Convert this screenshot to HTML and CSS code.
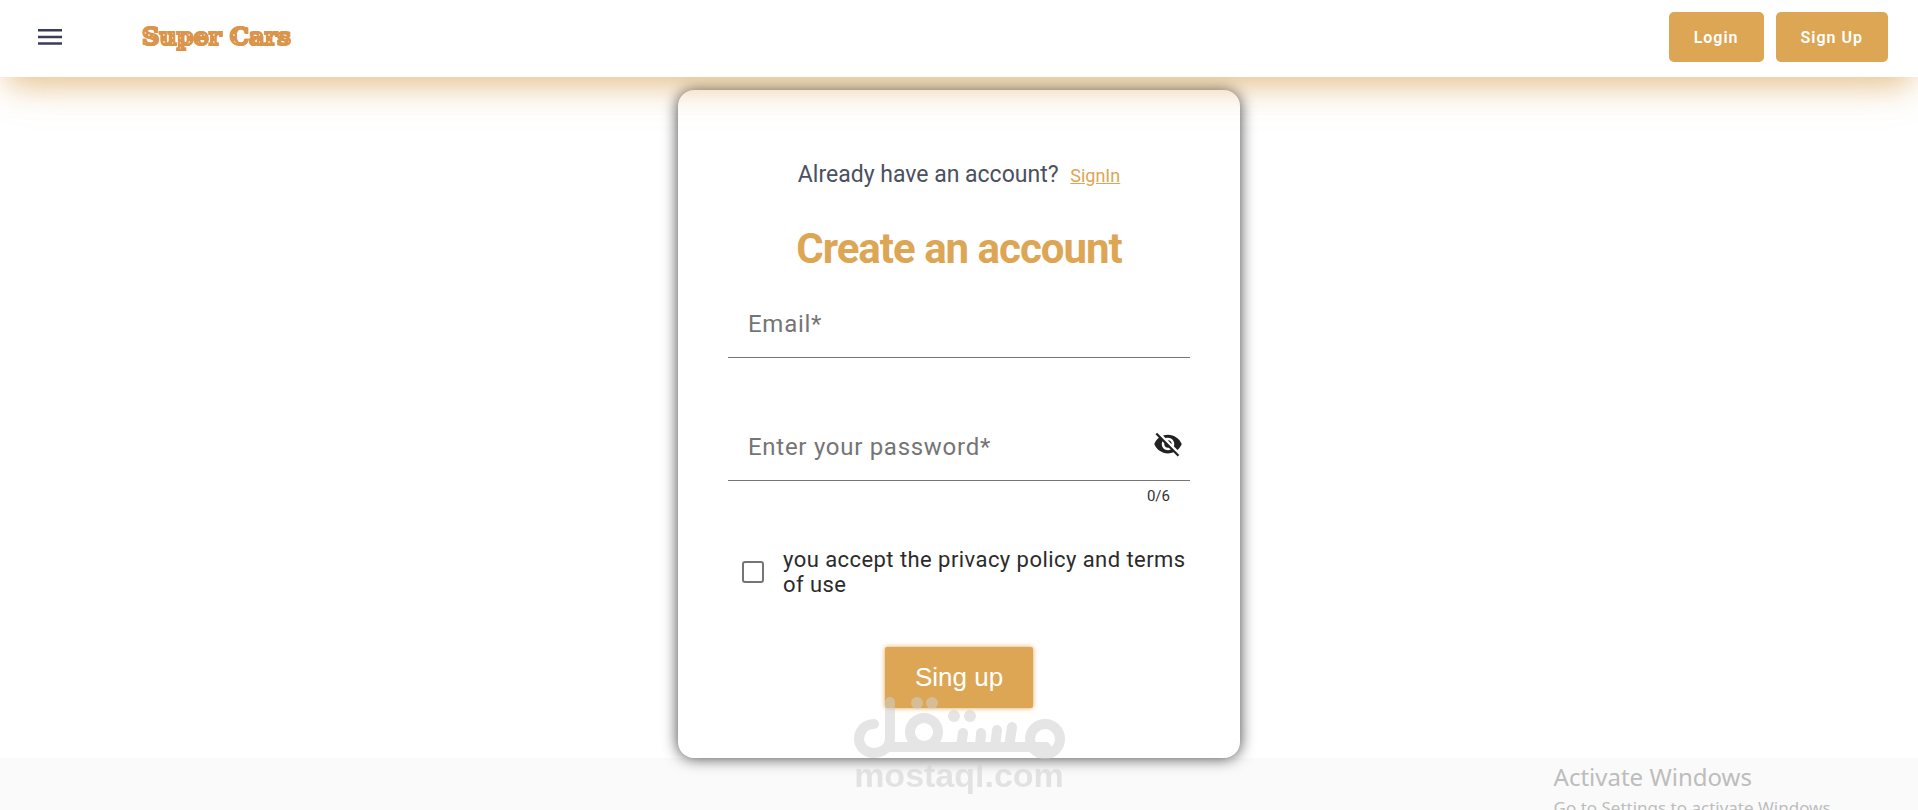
FILE: index.html
```html
<!DOCTYPE html>
<html lang="en">
<head>
<meta charset="utf-8">
<title>Super Cars</title>
<meta name="viewport" content="width=device-width, initial-scale=1">
<link rel="stylesheet" href="styles.css">
</head>
<body>
<header class="topbar">
  <button class="menu-button" type="button" aria-label="Open menu">
    <svg class="menu-icon" viewBox="0 0 24 16" aria-hidden="true"><path d="M0 0h24v2.500H0zM0 6.700h24v2.500H0zM0 13.200h24v2.500H0z"/></svg>
  </button>
  <a class="brand" href="#">Super Cars</a>
  <nav class="topbar-actions">
    <button class="nav-button" type="button">Login</button>
    <button class="nav-button" type="button">Sign Up</button>
  </nav>
</header>
<main class="page">
  <form class="card">
    <p class="signin-line">Already have an account? <a class="signin-link" href="#">SignIn</a></p>
    <h1 class="title">Create an account</h1>
    <div class="field">
      <input class="field-input" id="email" type="email" placeholder="Email*" aria-label="Email">
    </div>
    <div class="field field-password">
      <input class="field-input" id="password" type="password" maxlength="6" placeholder="Enter your password*" aria-label="Enter your password">
      <button class="eye-button" type="button" aria-label="Show password">
        <svg class="eye-icon" viewBox="0 0 24 24" aria-hidden="true"><path d="M12 7c2.760 0 5 2.240 5 5 0 .65-.13 1.260-.36 1.830l2.920 2.920c1.510-1.260 2.700-2.890 3.430-4.750-1.730-4.390-6-7.500-11-7.500-1.400 0-2.740.25-3.980.7l2.160 2.160C10.740 7.130 11.350 7 12 7zM2 4.270l2.280 2.280.46.46C3.080 8.300 1.780 10.020 1 12c1.730 4.390 6 7.500 11 7.500 1.550 0 3.030-.3 4.380-.84l.42.42L19.730 22 21 20.730 3.270 3 2 4.270zM7.530 9.800l1.550 1.550c-.05.21-.08.43-.08.65 0 1.660 1.340 3 3 3 .22 0 .44-.03.65-.08l1.550 1.550c-.67.33-1.410.53-2.200.53-2.760 0-5-2.240-5-5 0-.79.2-1.530.53-2.200zm4.310-.78l3.150 3.150.02-.16c0-1.660-1.340-3-3-3l-.17.010z"/></svg>
      </button>
    </div>
    <p class="counter">0/6</p>
    <div class="consent">
      <input class="consent-box" id="terms" type="checkbox">
      <label class="consent-label" for="terms">you accept the privacy policy and terms of use</label>
    </div>
    <button class="submit" type="submit">Sing up</button>
  </form>
</main>
<div class="watermark">
  <svg class="watermark-logo" viewBox="0 0 211 62" role="img" aria-label="مستقل">
    <g fill="none" stroke="currentColor" stroke-width="10" stroke-linecap="round" stroke-linejoin="round">
      <path d="M20 27C10 27 5 35 5 42C5 50 12 56 20 56C29 56 36 50 36 41V5M34 50H192"/>
      <circle cx="70" cy="35" r="14"/><circle cx="191" cy="42" r="15"/>
      <path d="M109 36L107 50M127 36L126 50M143 33L141 50M158 30L155 50"/>
    </g>
    <g fill="currentColor"><circle cx="63" cy="6" r="6"/><circle cx="78" cy="6" r="6"/><circle cx="100" cy="19" r="6"/><circle cx="116" cy="19" r="6"/></g>
  </svg>
  <span class="watermark-name">mostaql.com</span>
</div>
<aside class="activate">
  <p class="activate-title">Activate Windows</p>
  <p class="activate-text">Go to Settings to activate Windows.</p>
</aside>
</body>
</html>
```
FILE: styles.css
```css
* { box-sizing: border-box; }
body {
  margin: 0;
  min-height: 100vh;
  overflow: hidden;
  background: #fafafa;
  font-family: Roboto, "Liberation Sans", sans-serif;
}
p, h1 { margin: 0; }
button { border: 0; padding: 0; font: inherit; cursor: pointer; }
.topbar {
  position: relative;
  z-index: 2;
  display: flex;
  align-items: flex-start;
  padding: 12px 30px 15px 38px;
  background: #fff;
  box-shadow: 0 15px 30px -8px rgba(220, 165, 84, .65), 0 15px 50px -8px rgba(220, 165, 84, .15);
}
.menu-button { height: 50px; background: none; }
.menu-icon { display: block; width: 24px; height: 16px; fill: #3a3c58; }
.brand {
  margin-left: 80px;
  font: 900 24px/50px "DejaVu Serif", serif;
  color: transparent;
  background:
    radial-gradient(circle at 2px 2px, #f3d3ac 1px, transparent 1px) 0 0 / 5px 7px,
    radial-gradient(circle at 3px 1px, #f3d3ac 1px, transparent 1px) 0 0 / 7px 5px,
    #db944b;
  -webkit-background-clip: text;
  background-clip: text;
  -webkit-text-stroke: 2px #db944b;
  text-decoration: none;
}
.topbar-actions { display: flex; gap: 12px; margin-left: auto; }
.nav-button {
  height: 50px;
  padding: 0 25px;
  border-radius: 5px;
  background: #dca654;
  color: #fff;
  font-size: 16px;
  font-weight: 600;
  letter-spacing: 1px;
}
.page { padding-top: 13px; background: #fff; }
.card {
  display: flex;
  flex-direction: column;
  width: 562px;
  max-width: 100%;
  margin: 0 auto;
  padding: 70px 50px 50px;
  border-radius: 16px;
  background: #fff;
  box-shadow: 0 0 15px rgba(0, 0, 0, .75);
}
.signin-line { text-align: center; font-size: 23px; line-height: 30px; color: #4b5060; }
.signin-link { margin-left: 6px; font-size: 18px; color: #dca654; }
.title { margin-top: 33px; text-align: center; font-size: 42px; line-height: 50px; color: #dca654; letter-spacing: -1px; }
.field { display: flex; align-items: center; height: 74px; margin-top: 10px; border-bottom: 1px solid #757575; }
.field-password { margin-top: 49px; }
.field-input {
  flex: 1;
  min-width: 0;
  height: 56px;
  padding: 6px 0 0 20px;
  border: 0;
  outline: 0;
  background: none;
  font: 24px Roboto, sans-serif;
  letter-spacing: .03em;
}
.field-input::placeholder { color: #757575; opacity: 1; }
.eye-button { margin-right: 7px; background: none; }
.eye-icon { display: block; width: 30px; height: 30px; fill: #222; }
.counter { padding: 5px 20px 0 0; text-align: right; font-size: 15px; line-height: 20px; color: #333; }
.consent { display: flex; align-items: center; gap: 19px; margin-top: 41px; padding-left: 14px; }
.consent-box {
  appearance: none;
  flex: none;
  width: 22px;
  height: 22px;
  margin: 0;
  border: 2px solid #757575;
  border-radius: 3px;
}
.consent-label { font-size: 22px; line-height: 25px; color: #2b2b2b; letter-spacing: .02em; }
.submit {
  align-self: center;
  height: 61px;
  margin-top: 50px;
  padding: 0 30px;
  border-radius: 2px;
  background: #dca654;
  color: #fff;
  font: 26px "Liberation Sans", Arial, sans-serif;
  box-shadow: 0 0 5px #dca654;
}
.watermark {
  position: absolute;
  z-index: 3;
  top: 697px;
  left: 0;
  right: 0;
  display: flex;
  flex-direction: column;
  align-items: center;
  color: #d0d0d0;
  opacity: .55;
  pointer-events: none;
}
.watermark-logo { display: block; width: 211px; height: 62px; }
.watermark-name { font: 700 34px/32px "Liberation Sans", Arial, sans-serif; }
.activate {
  position: absolute;
  top: 760px;
  left: 81%;
  font-family: "Noto Sans", "Open Sans", sans-serif;
  color: #bdbdbd;
  white-space: nowrap;
}
.activate-title { font-size: 24px; line-height: 34px; }
.activate-text { font-size: 17px; line-height: 28px; }
```
